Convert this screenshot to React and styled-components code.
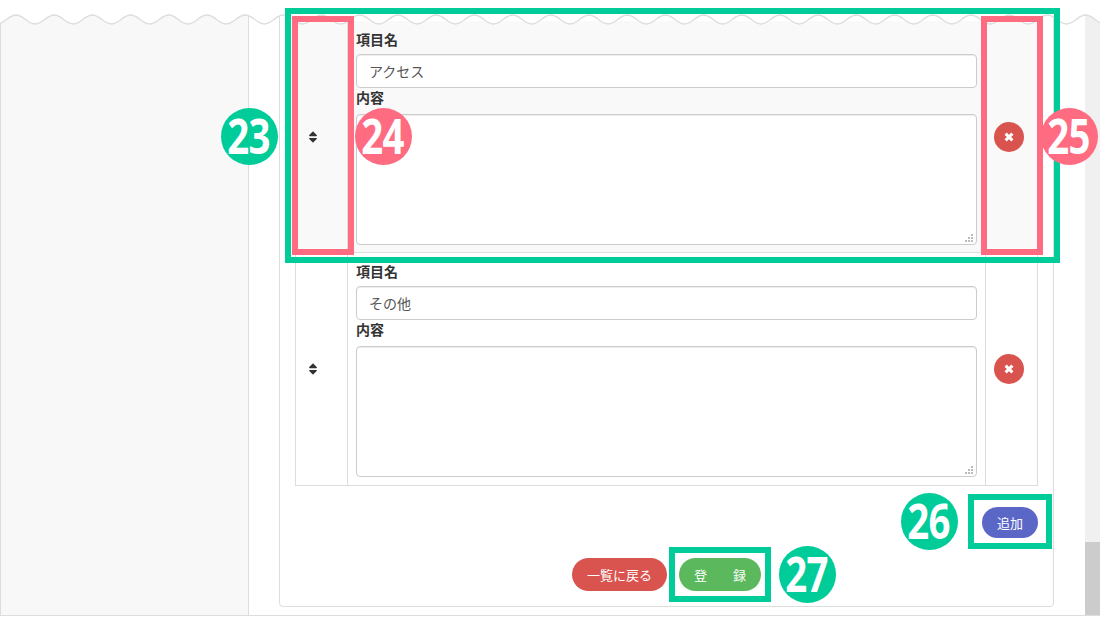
import React from "react"
import styled, { createGlobalStyle } from "styled-components"
import { FaSort } from "react-icons/fa"

const GlobalStyle = createGlobalStyle`
  html, body {
    margin: 0;
    height: 637px;
    overflow: hidden;
    background: #fff;
    font-family: "Noto Sans CJK JP", "Noto Sans", sans-serif;
    color: #333;
  }
  * {
    box-sizing: border-box;
  }
`

const Stage = styled.div`
  position: relative;
  width: 1100px;
  height: 637px;
  overflow: hidden;
`

const Frame = styled.div`
  display: flex;
  height: 616px;
  border-bottom: 1px solid #ddd;
`

const Sidebar = styled.aside`
  width: 249px;
  flex-shrink: 0;
  background: #f8f8f8;
  border-left: 1px solid #ddd;
  border-right: 1px solid #ddd;
`

const Main = styled.main`
  flex: 1;
  display: flex;
  flex-direction: column;
  justify-content: flex-end;
  padding: 0 31px 8px 30px;
  overflow: hidden;
`

const Scrollbar = styled.div`
  width: 15px;
  flex-shrink: 0;
  display: flex;
  flex-direction: column;
  justify-content: flex-end;
  background: #f0f0f0;
`

const ScrollThumb = styled.div`
  height: 73px;
  background: #ccc;
`

const Panel = styled.section`
  background: #fff;
  border: 1px solid #ddd;
  border-radius: 4px;
  padding: 20px 15px 15px;
`

const Table = styled.div`
  border: 1px solid #ddd;
  border-top: 0;
`

const Row = styled.div`
  display: grid;
  grid-template-columns: 52px 1fr 52px;
  height: 232px;
  background: ${(p) => (p.$active ? "#f9f9f9" : "#fff")};
  border-bottom: 1px solid #ddd;

  &:last-child {
    border-bottom: 0;
  }
`

const HandleCell = styled.div`
  display: flex;
  align-items: center;
  padding-left: 10px;
  border-right: 1px solid #ddd;
  font-size: 14px;
  color: #333;
`

const FieldCell = styled.div`
  padding: 9px 8px 8px;
  display: flex;
  flex-direction: column;
`

const ActionCell = styled.div`
  display: flex;
  align-items: center;
  padding-left: 8px;
  border-left: 1px solid #ddd;
`

const Label = styled.label`
  display: block;
  font-size: 14px;
  font-weight: 700;
  line-height: 19px;
  color: #333;
  margin-bottom: ${(p) => p.$gap}px;
`

const TextInput = styled.input`
  display: block;
  width: 100%;
  height: 34px;
  padding: 0 12px;
  border: 1px solid #ccc;
  border-radius: 4px;
  background: #fff;
  font: inherit;
  font-size: 14px;
  color: #555;
  box-shadow: inset 0 1px 1px rgba(0, 0, 0, 0.075);
`

const AreaWrap = styled.div`
  position: relative;
`

const TextArea = styled.textarea`
  display: block;
  width: 100%;
  height: 131px;
  padding: 6px 12px;
  border: 1px solid #ccc;
  border-radius: 4px;
  background: #fff;
  font: inherit;
  font-size: 14px;
  color: #555;
  resize: none;
  box-shadow: inset 0 1px 1px rgba(0, 0, 0, 0.075);
`

const GripSvg = styled.svg`
  position: absolute;
  right: 4px;
  bottom: 3px;
  display: block;
`

const RemoveButton = styled.button`
  width: 30px;
  height: 30px;
  padding: 0;
  border: 0;
  border-radius: 50%;
  background: #d9534f;
  display: flex;
  align-items: center;
  justify-content: center;
`

const AddRow = styled.div`
  display: flex;
  justify-content: flex-end;
  padding-top: 21px;
`

const Footer = styled.div`
  display: flex;
  justify-content: center;
  gap: 12px;
  padding-top: 20px;
`

const Pill = styled.button`
  height: ${(p) => p.$h}px;
  width: ${(p) => p.$w}px;
  padding: 0;
  border: 0;
  border-radius: 17px;
  background: ${(p) => p.$bg};
  color: #fff;
  font: inherit;
  font-size: 13px;
  white-space: pre;
`

const WaveSvg = styled.svg`
  position: absolute;
  top: 0;
  left: 0;
  display: block;
`

const Outline = styled.div`
  position: absolute;
  left: ${(p) => p.$x}px;
  top: ${(p) => p.$y}px;
  width: ${(p) => p.$w}px;
  height: ${(p) => p.$h}px;
  border: 6px solid ${(p) => p.$color};
`

const Badge = styled.div`
  position: absolute;
  left: ${(p) => p.$x - 28.5}px;
  top: ${(p) => p.$y - 28.5}px;
  width: 57px;
  height: 57px;
  border-radius: 50%;
  background: ${(p) => p.$color};
  color: #fff;
  display: flex;
  align-items: center;
  justify-content: center;
`

const BadgeDigits = styled.span`
  display: block;
  margin-right: 2px;
  font-family: "Open Sans", "Noto Sans", sans-serif;
  font-size: 48px;
  font-weight: 700;
  letter-spacing: -1px;
  line-height: 1;
  transform: scaleX(0.8);
`

const GREEN = "#00cc99"
const PINK = "#ff6b81"
const WAVE_PERIOD = 38.2

const wavePath = () => {
  let d = `M${-WAVE_PERIOD * 0.5 + 16 - WAVE_PERIOD} 24`
  let x = 16 - WAVE_PERIOD * 1.5
  while (x < 1120) {
    const p = WAVE_PERIOD
    d += ` C${x + p * 0.2} 24 ${x + p * 0.3} 15 ${x + p * 0.5} 15`
    d += ` C${x + p * 0.7} 15 ${x + p * 0.8} 24 ${x + p} 24`
    x += p
  }
  return d
}

const Wave = () => {
  const line = wavePath()
  return (
    <WaveSvg width="1100" height="30" viewBox="0 0 1100 30">
      <path d={`${line} L1120 0 L-40 0 Z`} fill="#fff" />
      <path d={line} fill="none" stroke="#ddd" strokeWidth="1.3" />
    </WaveSvg>
  )
}

const Grip = () => (
  <GripSvg width="8" height="8" viewBox="0 0 8 8" fill="#bbb">
    <rect x="6" y="0" width="2" height="2" />
    <rect x="3" y="3" width="2" height="2" />
    <rect x="6" y="3" width="2" height="2" />
    <rect x="0" y="6" width="2" height="2" />
    <rect x="3" y="6" width="2" height="2" />
    <rect x="6" y="6" width="2" height="2" />
  </GripSvg>
)

const CrossIcon = () => (
  <svg width="10" height="10" viewBox="0 0 10 10">
    <path d="M1.6 1.6 L8.4 8.4 M8.4 1.6 L1.6 8.4" stroke="#fff" strokeWidth="3" />
  </svg>
)

const ItemRow = ({ active, name }) => (
  <Row $active={active}>
    <HandleCell>
      <FaSort />
    </HandleCell>
    <FieldCell>
      <Label $gap={5}>項目名</Label>
      <TextInput defaultValue={name} />
      <Label $gap={7}>内容</Label>
      <AreaWrap>
        <TextArea />
        <Grip />
      </AreaWrap>
    </FieldCell>
    <ActionCell>
      <RemoveButton>
        <CrossIcon />
      </RemoveButton>
    </ActionCell>
  </Row>
)

const Marker = ({ x, y, color, children }) => (
  <Badge $x={x} $y={y} $color={color}>
    <BadgeDigits>{children}</BadgeDigits>
  </Badge>
)

const App = () => (
  <Stage>
    <GlobalStyle />
    <Frame>
      <Sidebar />
      <Main>
        <Panel>
          <Table>
            <ItemRow active name="アクセス" />
            <ItemRow name="その他" />
          </Table>
          <AddRow>
            <Pill $w={56} $h={31} $bg="#5b67c7">追加</Pill>
          </AddRow>
          <Footer>
            <Pill $w={95} $h={33} $bg="#d9534f">一覧に戻る</Pill>
            <Pill $w={82} $h={33} $bg="#5cb85c">登　　録</Pill>
          </Footer>
        </Panel>
      </Main>
      <Scrollbar>
        <ScrollThumb />
      </Scrollbar>
    </Frame>
    <Wave />
    <Outline $x={285} $y={8} $w={775} $h={255} $color={GREEN} />
    <Outline $x={292} $y={16} $w={62} $h={239} $color={PINK} />
    <Outline $x={981} $y={16} $w={62} $h={239} $color={PINK} />
    <Outline $x={968} $y={494} $w={84} $h={55} $color={GREEN} />
    <Outline $x={669} $y={547} $w={102} $h={55} $color={GREEN} />
    <Marker x={249} y={136} color={GREEN}>23</Marker>
    <Marker x={383} y={136} color={PINK}>24</Marker>
    <Marker x={1069} y={136} color={PINK}>25</Marker>
    <Marker x={929} y={521} color={GREEN}>26</Marker>
    <Marker x={807} y={574} color={GREEN}>27</Marker>
  </Stage>
)

export default App
